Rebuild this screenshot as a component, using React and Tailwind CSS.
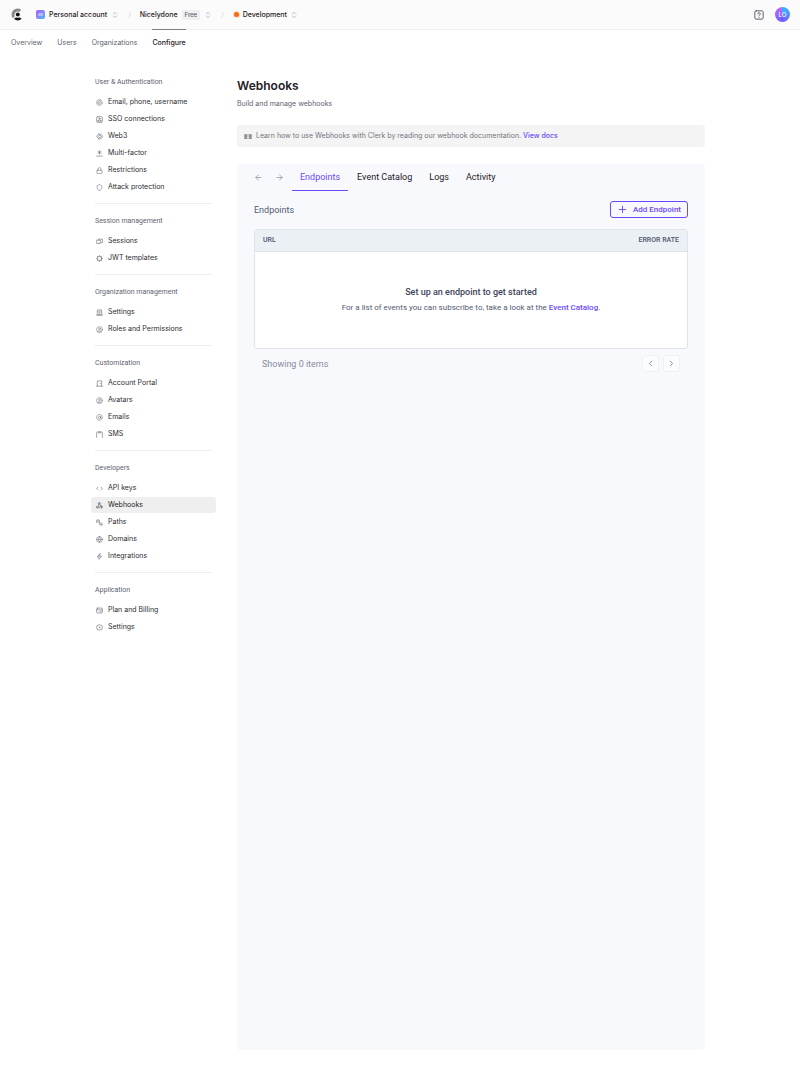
import {
  LuArrowLeft,
  LuArrowRight,
  LuAtSign,
  LuChevronLeft,
  LuChevronRight,
  LuChevronsUpDown,
  LuCircleUser,
  LuFingerprint,
  LuGlobe,
  LuLock,
  LuPlus,
  LuShield,
  LuWebhook,
} from "react-icons/lu";

const line = {
  viewBox: "0 0 16 16",
  fill: "none",
  stroke: "currentColor",
  strokeWidth: 1.5,
  strokeLinecap: "round",
  strokeLinejoin: "round",
};

function SsoIcon(props) {
  return (
    <svg {...line} {...props}>
      <rect x="1.5" y="1.5" width="13" height="13" rx="2" />
      <circle cx="8" cy="6" r="1.5" />
      <path d="M4.5 11.5v-2h2M11.5 11.5v-2h-2M4.5 11.5h7" />
    </svg>
  );
}

function Web3Icon(props) {
  return (
    <svg {...line} {...props}>
      <path d="M6 2.5 1.5 8 6 13.5M6 2.5C11 1.5 14.5 4.5 14.5 8S11 14.5 6 13.5M8.5 4.5 5.5 8l3 3.5L11.5 8z" />
    </svg>
  );
}

function FactorIcon(props) {
  return (
    <svg {...line} {...props}>
      <path d="M8 1.5v8M4.5 3.5l7 4M11.5 3.5l-7 4M1.5 14h13" />
    </svg>
  );
}

function SessionsIcon(props) {
  return (
    <svg {...line} {...props}>
      <path d="M5.5 4V2.5h9V11H12M1.5 5H10v7H6.5L5 14v-2H1.5z" />
    </svg>
  );
}

function JwtIcon(props) {
  return (
    <svg {...line} {...props}>
      <circle cx="8" cy="8" r="5" strokeWidth="1.8" />
      <path d="M8 1.2v1.5M8 13.3v1.5M1.2 8h1.5M13.3 8h1.5M3.2 3.2l1 1M11.8 11.8l1 1M3.2 12.8l1-1M11.8 4.2l1-1" />
    </svg>
  );
}

function BuildingIcon(props) {
  return (
    <svg {...line} {...props}>
      <path d="M3 14V2h10v12M1.5 14h13M6.5 5.5h3M6.5 8.5h3M6.5 14v-2.5h3V14" />
    </svg>
  );
}

function PortalIcon(props) {
  return (
    <svg {...line} {...props}>
      <path d="M3 14V2h10v12M1 14h14M10 8v.5" />
    </svg>
  );
}

function SmsIcon(props) {
  return (
    <svg {...line} {...props}>
      <path d="M1.5 14.5V4a2 2 0 0 1 2-2h9a2 2 0 0 1 2 2v10.5M6 2v2.5h4V2" />
    </svg>
  );
}

function CodeIcon(props) {
  return (
    <svg {...line} {...props}>
      <path d="M4.5 5 1.5 8l3 3M11.5 5l3 3-3 3" />
    </svg>
  );
}

function PathsIcon(props) {
  return (
    <svg {...line} {...props}>
      <path d="M1.5 8V3.5a1.5 1.5 0 0 1 3 0V8M4.5 2H6a2 2 0 0 1 2 2v8a2 2 0 0 0 2 2h1.5M11.5 8v4.5a1.5 1.5 0 0 0 3 0V11" />
    </svg>
  );
}

function BoltIcon(props) {
  return (
    <svg {...line} {...props}>
      <path d="M9 1.5 3 9h4l-.5 5.5L13 7H8.5z" />
    </svg>
  );
}

function BillingIcon(props) {
  return (
    <svg {...line} {...props}>
      <rect x="1.5" y="2.5" width="13" height="11" rx="2" />
      <path d="M2 6.5h12M9.5 10.5h2" />
    </svg>
  );
}

function GearIcon(props) {
  return (
    <svg {...line} {...props}>
      <path d="M8 1.5 10.5 3l3 .5.5 3 .5 1.5-.5 1.5-.5 3-3 .5L8 14.5 5.5 13l-3-.5-.5-3L1.5 8 2 6.5l.5-3 3-.5z" />
      <circle cx="8" cy="8" r=".8" />
    </svg>
  );
}

function DocsIcon(props) {
  return (
    <svg viewBox="0 0 16 14" fill="currentColor" {...props}>
      <path d="M0 2h7v10H0zM9 2h7v10H9zM7 3h2v1H7z" opacity=".55" />
      <path d="M2 4h1.5v5H2zM5 4h1v5H5zM10 4h1v5h-1zM12.5 4H14v5h-1.5zM1 10h5v1H1zM10 10h5v1h-5z" />
    </svg>
  );
}

const groups = [
  {
    title: "User & Authentication",
    items: [
      { label: "Email, phone, username", icon: LuFingerprint },
      { label: "SSO connections", icon: SsoIcon },
      { label: "Web3", icon: Web3Icon },
      { label: "Multi-factor", icon: FactorIcon },
      { label: "Restrictions", icon: LuLock },
      { label: "Attack protection", icon: LuShield },
    ],
  },
  {
    title: "Session management",
    items: [
      { label: "Sessions", icon: SessionsIcon },
      { label: "JWT templates", icon: JwtIcon },
    ],
  },
  {
    title: "Organization management",
    items: [
      { label: "Settings", icon: BuildingIcon },
      { label: "Roles and Permissions", icon: LuCircleUser },
    ],
  },
  {
    title: "Customization",
    items: [
      { label: "Account Portal", icon: PortalIcon },
      { label: "Avatars", icon: LuCircleUser },
      { label: "Emails", icon: LuAtSign },
      { label: "SMS", icon: SmsIcon },
    ],
  },
  {
    title: "Developers",
    items: [
      { label: "API keys", icon: CodeIcon },
      { label: "Webhooks", icon: LuWebhook, active: true },
      { label: "Paths", icon: PathsIcon },
      { label: "Domains", icon: LuGlobe },
      { label: "Integrations", icon: BoltIcon },
    ],
  },
  {
    title: "Application",
    items: [
      { label: "Plan and Billing", icon: BillingIcon },
      { label: "Settings", icon: GearIcon },
    ],
  },
];

const navLinks = ["Overview", "Users", "Organizations", "Configure"];
const tabs = ["Endpoints", "Event Catalog", "Logs", "Activity"];

function Logo() {
  return (
    <svg viewBox="0 0 22 24" className="h-[13px] w-3" aria-hidden="true">
      <path
        d="M19 3.5A11 11 0 0 0 3.5 19l3.7-3.6A6 6 0 0 1 15 7.2z"
        fill="#8b8b8b"
      />
      <circle cx="12.5" cy="12" r="3.6" fill="#111" />
      <path d="M19.5 20.5 15.8 17a6.5 6.5 0 0 1-6.6 0L5.5 20.5a11.5 11.5 0 0 0 14 0z" fill="#111" />
    </svg>
  );
}

function Header() {
  return (
    <header className="flex h-[30px] items-center justify-between border-b border-[#f0f0f0] bg-[#fbfbfb] pr-[10px] pl-[11px]">
      <div className="flex items-center text-[#1f2024]">
        <a href="#" aria-label="Home">
          <Logo />
        </a>
        <button type="button" className="ml-[13px] flex items-center gap-1 font-medium">
          <span className="flex h-[9px] w-[9px] items-center justify-center rounded-[2px] bg-linear-to-br from-[#a855f7] to-[#22b8ff]">
            <span className="h-[3px] w-[5px] rounded-[1px] bg-white/40" />
          </span>
          Personal account
          <LuChevronsUpDown size={8} className="text-gray-400" />
        </button>
        <span className="mx-[9px] text-gray-300">/</span>
        <button type="button" className="flex items-center gap-1 font-medium">
          Nicelydone
          <span className="rounded-[2px] bg-[#efefef] px-[3px] text-[6px] leading-[10px] text-[#5e5f6e]">
            Free
          </span>
          <LuChevronsUpDown size={8} className="text-gray-400" />
        </button>
        <span className="mx-[9px] text-gray-300">/</span>
        <button type="button" className="flex items-center gap-[3px] font-medium">
          <span className="flex h-[7px] w-[7px] items-center justify-center rounded-full bg-[#ffdcc2]">
            <span className="h-[5px] w-[5px] rounded-full bg-[#f36b16]" />
          </span>
          Development
          <LuChevronsUpDown size={8} className="text-gray-400" />
        </button>
      </div>
      <div className="flex items-center gap-[11px]">
        <button type="button" aria-label="Help">
          <svg
            viewBox="0 0 18 18"
            fill="none"
            stroke="#5e5f6e"
            strokeWidth="1.8"
            strokeLinecap="round"
            className="h-[10px] w-[10px]"
          >
            <rect x="1.5" y="1.5" width="15" height="15" rx="2.5" />
            <path d="M6.8 7a2.2 2.2 0 1 1 3.2 2c-.7.4-1 .7-1 1.5M9 13.2v.1" />
          </svg>
        </button>
        <button
          type="button"
          className="flex h-[15px] w-[15px] items-center justify-center rounded-full bg-conic from-[#22b8ff] via-[#6c5cff] to-[#c565ff] text-[6px] font-medium text-white"
        >
          LO
        </button>
      </div>
    </header>
  );
}

function TopNav() {
  return (
    <nav className="-mt-px flex gap-[15px] px-[11px]">
      {navLinks.map((label) => (
        <a
          key={label}
          href="#"
          className={
            label === "Configure"
              ? "border-t border-[#7d7d7d] pt-[7px] font-medium text-[#1f2024]"
              : "border-t border-transparent pt-[7px] text-[#5e5f6e]"
          }
        >
          {label}
        </a>
      ))}
    </nav>
  );
}

function Sidebar() {
  return (
    <aside className="w-[117px] shrink-0">
      {groups.map((group) => (
        <section
          key={group.title}
          className="mb-[11px] border-b border-[#eeeeee] pb-2 last:border-0"
        >
          <h2 className="mb-[6px] font-[Roboto,sans-serif] text-[7px] leading-[12px] whitespace-nowrap text-[#5e5f6e]">
            {group.title}
          </h2>
          <ul className="flex flex-col gap-px">
            {group.items.map(({ label, icon: Icon, active }) => (
              <li key={label}>
                <a
                  href="#"
                  className={`-mx-1 flex h-4 items-center gap-[5px] rounded-[3px] px-[5px] whitespace-nowrap ${
                    active ? "bg-[#efefef] text-[#1f2024]" : "text-[#2b2c31]"
                  }`}
                >
                  <Icon
                    className={`h-[7px] w-[7px] shrink-0 ${active ? "text-[#1f2024]" : "text-[#73747f]"}`}
                  />
                  {label}
                </a>
              </li>
            ))}
          </ul>
        </section>
      ))}
    </aside>
  );
}

function EndpointsPanel() {
  return (
    <section className="mt-[17px] flex-1 rounded-[4px] bg-[#f8f9fd] px-[17px] font-[Roboto,sans-serif]">
      <div className="flex h-[27px] items-stretch">
        <button type="button" aria-label="Back" className="w-[9px] text-[#8d8f98]">
          <LuArrowLeft size={9} />
        </button>
        <button type="button" aria-label="Forward" className="ml-3 w-[9px] text-[#8d8f98]">
          <LuArrowRight size={9} />
        </button>
        <div role="tablist" className="ml-2 flex gap-px">
          {tabs.map((tab, i) => (
            <button
              key={tab}
              type="button"
              role="tab"
              aria-selected={i === 0}
              className={
                i === 0
                  ? "border-b border-[#6c47ff] px-2 text-[9px] text-[#6c47ff]"
                  : "border-b border-transparent px-2 text-[9px] text-[#1f2024]"
              }
            >
              {tab}
            </button>
          ))}
        </div>
      </div>

      <div className="mt-[10px] flex items-center justify-between">
        <h2 className="text-[9px] text-[#545b72]">Endpoints</h2>
        <button
          type="button"
          className="flex h-[17px] items-center gap-[5px] rounded-[3px] border border-[#6c47ff] px-[6px] text-[8px] font-medium text-[#6c47ff]"
        >
          <LuPlus size={11} />
          Add Endpoint
        </button>
      </div>

      <div className="mt-[11px] overflow-hidden rounded-[3px] border border-[#dfe3ea] bg-white">
        <table className="w-full">
          <thead>
            <tr className="h-[21px] border-b border-[#dfe3ea] bg-[#ebf0f5] text-[7px] text-[#4d5468]">
              <th className="px-2 text-left font-medium">URL</th>
              <th className="px-2 text-right font-medium">ERROR RATE</th>
            </tr>
          </thead>
          <tbody>
            <tr>
              <td colSpan={2} className="h-[97px] text-center">
                <p className="text-[9px] leading-[15px] font-medium text-[#3d4459]">
                  Set up an endpoint to get started
                </p>
                <p className="text-[8px] leading-[15px] text-[#545b72]">
                  For a list of events you can subscribe to, take a look at the{" "}
                  <a href="#" className="font-medium text-[#6c47ff]">
                    Event Catalog
                  </a>
                  .
                </p>
              </td>
            </tr>
          </tbody>
        </table>
      </div>

      <div className="mt-[6px] flex items-center justify-between px-2">
        <p className="text-[9px] text-[#868c9b]">Showing 0 items</p>
        <div className="flex gap-1">
          <button
            type="button"
            aria-label="Previous page"
            className="flex h-[17px] w-[17px] items-center justify-center rounded-[3px] border border-[#f0f1f6] bg-[#fbfcfe] text-[#6f7686]"
          >
            <LuChevronLeft size={9} />
          </button>
          <button
            type="button"
            aria-label="Next page"
            className="flex h-[17px] w-[17px] items-center justify-center rounded-[3px] border border-[#f0f1f6] bg-[#fbfcfe] text-[#6f7686]"
          >
            <LuChevronRight size={9} />
          </button>
        </div>
      </div>
    </section>
  );
}

export default function App() {
  return (
    <div className="flex min-h-screen flex-col bg-white font-[Inter,sans-serif] text-[7px] leading-[12px]">
      <Header />
      <TopNav />
      <div className="mx-auto mt-[27px] flex w-full max-w-[610px] flex-1 gap-[25px] pb-[22px]">
        <Sidebar />
        <main className="flex min-w-0 flex-1 flex-col">
          <h1 className="text-[12px] leading-5 font-semibold text-[#1f2024]">Webhooks</h1>
          <p className="mt-[2px] text-[#5e5f6e]">Build and manage webhooks</p>
          <div className="mt-[15px] flex h-[22px] items-center gap-1 rounded-[3px] bg-[#f4f4f4] px-[7px] text-[#73747f]">
            <DocsIcon className="h-[7px] w-2" />
            <p>
              Learn how to use Webhooks with Clerk by reading our webhook documentation.{" "}
              <a href="#" className="font-medium text-[#6c47ff]">
                View docs
              </a>
            </p>
          </div>
          <EndpointsPanel />
        </main>
      </div>
    </div>
  );
}
